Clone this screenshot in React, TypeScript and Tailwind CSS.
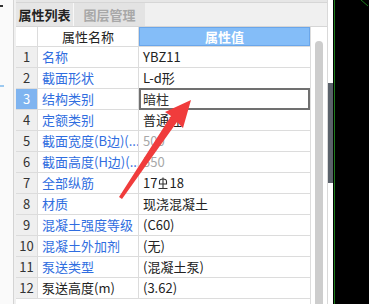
import React from 'react';

const rows = [
  { no: '1', name: '名称', value: 'YBZ11' },
  { no: '2', name: '截面形状', value: 'L-d形' },
  { no: '3', name: '结构类别', value: '暗柱', selected: true },
  { no: '4', name: '定额类别', value: '普通柱' },
  { no: '5', name: '截面宽度(B边)(...', value: '500', muted: true },
  { no: '6', name: '截面高度(H边)(...', value: '550', muted: true },
  { no: '7', name: '全部纵筋', value: 'rebar' },
  { no: '8', name: '材质', value: '现浇混凝土' },
  { no: '9', name: '混凝土强度等级', value: '(C60)' },
  { no: '10', name: '混凝土外加剂', value: '(无)' },
  { no: '11', name: '泵送类型', value: '(混凝土泵)' },
  { no: '12', name: '泵送高度(m)', value: '(3.62)', plain: true },
];

const RebarMark = () => (
  <svg width="10" height="13" viewBox="0 0 10 13" className="mx-[1px] inline-block align-[-1px]">
    <path d="M1.5 7 V4.5 Q1.5 2 5 2 Q8.5 2 8.5 4.5 V7 Z" fill="none" stroke="#333" strokeWidth="1.1" />
    <path d="M5 0.5 V11.5 M0.5 11.5 H9.5" stroke="#333" strokeWidth="1.1" fill="none" />
  </svg>
);

export default function App() {
  return (
    <div
      className="relative flex w-[369px] h-[304px] overflow-hidden bg-white text-[13px] text-[#333]"
      style={{ fontFamily: '"Noto Sans CJK SC", "Noto Sans", sans-serif' }}
    >
      {/* left neighbour panel */}
      <div className="w-[14px] bg-[#fafafa] border-r border-[#d4d4d4] flex flex-col">
        <div className="mt-[5px] w-[3px] h-[2px] bg-[#333]" />
        <div className="mt-[78px] w-[4px] h-[2px] bg-[#9cc9f0]" />
      </div>
      <div className="w-[2px] bg-[#f0f0f0]" />

      {/* property panel */}
      <div className="w-[311px] flex flex-col">
        <div className="h-[27px] flex flex-col bg-[#f0f0f0]">
          <div className="h-[3px] bg-[#e6e6e6] border-b border-[#d6d6d6]" />
          <div className="flex-1 flex border-b border-[#d6d6d6]">
            <div className="w-[58px] flex items-center justify-center bg-[#e6e6e6] font-bold text-[#222] border-r border-[#f8f8f8]">
              属性列表
            </div>
            <div className="w-[71px] flex items-center justify-center bg-[#e3e3e3] font-bold text-[#a8a8a8]">
              图层管理
            </div>
          </div>
        </div>

        <div className="flex flex-1">
          {/* table */}
          <div className="w-[295px] border-r border-[#dcdcdc] flex flex-col">
            <div className="flex h-[20px] border-b border-[#dcdcdc]">
              <div className="w-[22px] border-r border-[#dcdcdc] bg-white" />
              <div className="w-[101px] border-r border-[#dcdcdc] flex items-center justify-center text-[#222]">
                属性名称
              </div>
              <div className="flex-1 flex items-center justify-center bg-[#84bdf8] border border-[#6aa6ea] text-white font-bold">
                属性值
              </div>
            </div>
            {rows.map((r) => (
              <div key={r.no} className="flex h-[21px] border-b border-[#dcdcdc]">
                <div
                  className={
                    r.selected
                      ? 'w-[22px] border-r border-[#dcdcdc] bg-[#7fb4f0] text-white flex items-center justify-center'
                      : 'w-[22px] border-r border-[#dcdcdc] bg-[#efefef] flex items-center justify-center'
                  }
                >
                  {r.no}
                </div>
                <div
                  className={
                    r.plain
                      ? 'w-[101px] border-r border-[#dcdcdc] flex items-center pl-[4px] whitespace-nowrap overflow-hidden text-[#222]'
                      : 'w-[101px] border-r border-[#dcdcdc] flex items-center pl-[4px] whitespace-nowrap overflow-hidden text-[#2f6de0]'
                  }
                >
                  {r.name}
                </div>
                <div
                  className={
                    r.selected
                      ? 'flex-1 flex items-center pl-[2px] border-2 border-[#707070] -mt-px h-[22px]'
                      : r.muted
                      ? 'flex-1 flex items-center pl-[4px] text-[#a8a8a8]'
                      : 'flex-1 flex items-center pl-[4px] text-[#222]'
                  }
                >
                  {r.value === 'rebar' ? (
                    <span className="flex items-center">
                      17<RebarMark />18
                    </span>
                  ) : (
                    r.value
                  )}
                </div>
              </div>
            ))}
          </div>
          {/* scrollbar */}
          <div className="flex-1 flex justify-center bg-white pt-[14px]">
            <div className="w-[8px] h-full bg-[#cdcdcd] rounded-t-[4px]" />
          </div>
        </div>
      </div>

      {/* right strip */}
      <div className="w-px bg-[#d9d9d9]" />
      <div className="w-[5px] flex flex-col bg-white">
        <div className="h-[83px]" />
        <div className="h-[100px] bg-[#5b626b]" />
      </div>
      <div className="w-px bg-black" />
      <div className="w-px bg-[#1c7a1c]" />
      <div className="flex-1 bg-black" />

      {/* red annotation arrow */}
      <svg className="absolute left-0 top-0 pointer-events-none" width="369" height="304">
        <polygon points="191,100 183,128 177,122 122,199 119,197 171,116 165,112" fill="#f03c3c" />
        <line x1="361" y1="0" x2="368" y2="6" stroke="#1c7a1c" strokeWidth="1" />
      </svg>
    </div>
  );
}
